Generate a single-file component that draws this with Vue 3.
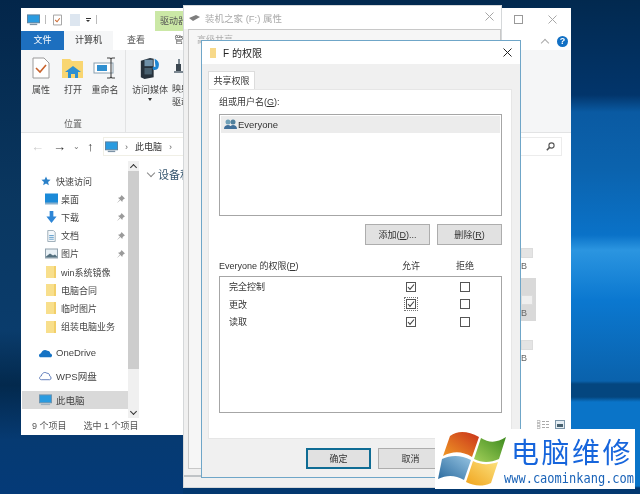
<template>
  <div class="desktop">
    <!-- explorer window -->
    <section class="win explorer">
      <header class="qat">
        <svg class="ico-pc" viewBox="0 0 14 12"><rect x="0.5" y="0.5" width="13" height="8.5" fill="#2a9be0" stroke="#5a7f9c"/><rect x="3" y="10" width="8" height="1.5" fill="#7d93a6"/></svg>
        <i class="sep"></i>
        <svg class="ico-note" viewBox="0 0 10 12"><path d="M.5.5h9v11h-9z" fill="#fff" stroke="#9a9a9a"/><path d="M2.5 6l2 2 3-4" fill="none" stroke="#cc6a33" stroke-width="1.2"/></svg>
        <i class="ghost"></i>
        <span class="drop"></span>
        <i class="sep"></i>
      </header>
      <div class="context">驱动器工具</div>
      <nav class="tabs">
        <span class="file">文件</span>
        <span class="active">计算机</span>
        <span class="plain view">查看</span>
        <span class="plain">管理</span>
      </nav>
      <div class="ribbon">
        <div class="group first">
          <div class="tools">
            <div class="tool">
              <svg width="18" height="22" viewBox="0 0 18 22"><path d="M1 1h11l5 5v15H1z" fill="#fff" stroke="#9a9a9a"/><path d="M4 11l4 4 6-7" fill="none" stroke="#c9622b" stroke-width="1.6"/></svg>
              <span>属性</span>
            </div>
            <div class="tool">
              <svg width="22" height="22" viewBox="0 0 22 22"><path d="M0 2h8l2 2h11v17H0z" fill="#f9d671"/><path d="M6 21v-6H3l8-6 8 6h-3v6h-3v-4H9v4z" fill="#2e8fd0"/></svg>
              <span>打开</span>
            </div>
            <div class="tool">
              <svg width="24" height="22" viewBox="0 0 24 22"><rect x="1" y="6" width="19" height="10" fill="#fff" stroke="#8aa0b0"/><rect x="4" y="8" width="10" height="6" fill="#2e8fd0"/><path d="M14 1h3l1 1 1-1h3M18 2v18M14 21h3l1-1 1 1h3" fill="none" stroke="#444" stroke-width="1.1"/></svg>
              <span>重命名</span>
            </div>
          </div>
          <label>位置</label>
        </div>
        <div class="group">
          <div class="tools">
            <div class="tool media">
              <svg width="24" height="24" viewBox="0 0 24 24"><path d="M2 4l10-3 4 1v20l-10 2-4-2z" fill="#26323c"/><rect x="6" y="3" width="9" height="7" fill="#6e90a8"/><rect x="6" y="12" width="8" height="7" fill="#48606f"/><path d="M17 2c4 2 6 5 4 10-1 2-5 3-6 1s2-3 3-2z" fill="#1e86d2"/></svg>
              <span>访问媒体</span>
              <b class="caret"></b>
            </div>
            <div class="tool cut">
              <svg width="14" height="22" viewBox="0 0 14 22"><rect x="4" y="7" width="5" height="7" fill="#3a4650"/><path d="M6 2h2v5H6zM2 14h10v2H2z" fill="#7c8892"/></svg>
              <span>映射<br>驱动</span>
            </div>
          </div>
        </div>
      </div>
      <div class="address">
        <span class="arrow back">←</span>
        <span class="arrow">→</span>
        <span class="chev">⌄</span>
        <span class="arrow up">↑</span>
        <div class="crumb">
          <svg width="13" height="12" viewBox="0 0 14 12"><rect x="0.5" y="0.5" width="13" height="8.5" fill="#2a9be0" stroke="#5a7f9c"/><rect x="3" y="10" width="8" height="1.5" fill="#7d93a6"/></svg>
          <span class="gt">›</span>
          <span>此电脑</span>
          <span class="gt">›</span>
        </div>
        <div class="search">
          <svg width="9" height="9" viewBox="0 0 9 9"><circle cx="5.5" cy="3.5" r="2.6" fill="none" stroke="#555" stroke-width="1.1"/><path d="M3.6 5.4L.8 8.2" stroke="#555" stroke-width="1.5"/></svg>
        </div>
      </div>
      <div class="help-row">
        <span class="collapse"></span>
        <span class="help">?</span>
      </div>
      <div class="win-btns">
        <i class="max"></i>
        <svg width="9" height="9" viewBox="0 0 9 9"><path d="M.5.5l8 8M8.5.5l-8 8" stroke="#a8a8a8"/></svg>
      </div>
      <div class="body">
        <aside class="sidebar">
          <ul class="quick">
            <li v-for="item in navItems" :key="item.name" :class="['row', item.kind]">
              <svg v-if="item.kind === 'star'" class="icon" viewBox="0 0 12 12"><path d="M6 .5l1.6 3.6 3.9.4-3 2.6.9 3.9L6 9l-3.4 2 .9-3.9-3-2.6 3.9-.4z" fill="#2a80c8"/></svg>
              <svg v-else-if="item.kind === 'desk'" class="icon" viewBox="0 0 13 11"><rect width="13" height="10" fill="#1b8ad8"/><rect y="9" width="13" height="2" fill="#8ab0cc"/></svg>
              <svg v-else-if="item.kind === 'down'" class="icon" viewBox="0 0 13 13"><path d="M4.5 0h4v6H12l-5.500 7L1 6h3.500z" fill="#2e86d6"/></svg>
              <svg v-else-if="item.kind === 'doc'" class="icon" viewBox="0 0 13 13"><path d="M2.500.5h6l2 2v10h-8z" fill="#f4f8fb" stroke="#98a8b4"/><path d="M4 6h5M4 8h5M4 10h5" stroke="#5d9bc9"/></svg>
              <svg v-else-if="item.kind === 'pic'" class="icon" viewBox="0 0 13 11"><rect x=".5" y=".5" width="12" height="9" fill="#e8f0f5" stroke="#8fa0ac"/><path d="M1 8l4-3 3 2 2-1 2 2v1H1z" fill="#54707f"/></svg>
              <svg v-else class="icon" viewBox="0 0 10 12"><rect width="10" height="12" fill="#f8df8c"/><rect x="8" width="2" height="12" fill="#f2cf6a"/></svg>
              <span class="name">{{ item.name }}</span>
              <svg v-if="item.pin" class="pin" width="8" height="8" viewBox="0 0 8 8"><path d="M4.500 0L8 3.500 6.800 4 5.500 5.500 5.300 7 1 2.700 2.500 2.500 4 1.200zM2.500 5L0 8l3-2.500z" fill="#9a9a9a"/></svg>
            </li>
          </ul>
          <div class="cloud">
            <svg class="icon wide" viewBox="0 0 14 9"><path d="M1 9c-2-1-1-4 1-4 1-3 4-5 7-3 2 0 3 1 3 3 2 0 3 3 1 4z" fill="#1673c4"/></svg>
            <span>OneDrive</span>
          </div>
          <div class="cloud wps">
            <svg class="icon wide" viewBox="0 0 14 10"><path d="M2.500 9C0 9 0 5.500 2.500 5 3 2 6 0 8.500 2c2 0 3 1 3 3 2 .5 2 4 0 4z" fill="#fff" stroke="#5a78b8"/></svg>
            <span>WPS网盘</span>
          </div>
          <div class="cloud selected">
            <svg class="icon wide" viewBox="0 0 14 12"><rect x=".5" y=".5" width="13" height="8.500" fill="#2a9be0" stroke="#6f93ad"/><rect x="2" y="10" width="10" height="1.500" fill="#9db0bf"/></svg>
            <span>此电脑</span>
          </div>
        </aside>
        <div class="scroll">
          <span class="up-mark"></span>
          <div class="thumb"></div>
          <span class="down-mark"></span>
        </div>
        <main class="content">
          <div class="section"><span class="sec-chev"></span>设备和驱动器</div>
        </main>
      </div>
      <footer class="status">
        <span>9 个项目</span>
        <span>选中 1 个项目</span>
      </footer>
    </section>

    <!-- drive tiles peeking out on the right of the dialogs -->
    <div class="tiles">
      <div class="tile t1"><i></i>B</div>
      <div class="tile t2"><i></i>B</div>
      <div class="tile t3"><i></i>B</div>
    </div>
    <div class="view-icons">
      <svg width="13" height="9" viewBox="0 0 13 9"><path d="M0 .5h3v2H0zM0 3.500h3v2H0zM0 6.500h3v2H0z" fill="none" stroke="#aaa" stroke-width=".7"/><path d="M5 1.500h3M9 1.500h3M5 4.500h3M9 4.500h3M5 7.500h3M9 7.500h3" stroke="#aaa"/></svg>
      <svg width="10" height="9" viewBox="0 0 10 9"><rect x=".5" y=".5" width="9" height="8" fill="#e4edf3" stroke="#7b95a8"/><rect x="2" y="4" width="6" height="3" fill="#46606f"/></svg>
    </div>

    <!-- properties dialog behind -->
    <section class="win props">
      <header class="props-title">
        <svg width="11" height="6" viewBox="0 0 11 6"><path d="M0 3l7-3 4 2-7 4z" fill="#7e7e7e"/></svg>
        <span>装机之家 (F:) 属性</span>
        <svg class="props-x" width="9" height="9" viewBox="0 0 9 9"><path d="M.5.5l8 8M8.500.5l-8 8" stroke="#a6a6a6"/></svg>
      </header>
      <div class="props-panel">高级共享</div>
      <div class="props-foot">
        <i></i><i></i><i></i>
      </div>
    </section>

    <!-- permissions dialog -->
    <section class="win perm">
      <header class="perm-title">
        <svg width="6" height="10" viewBox="0 0 6 10"><rect width="6" height="10" fill="#f7d98a"/></svg>
        <span>F 的权限</span>
        <svg class="perm-x" width="9" height="9" viewBox="0 0 9 9"><path d="M.5.5l8 8M8.500.5l-8 8" stroke="#222"/></svg>
      </header>
      <div class="perm-body">
        <div class="tab">共享权限</div>
        <div class="panel">
          <div class="label"><span>组或用户名(<u>G</u>):</span></div>
          <div class="listbox">
            <div class="user">
              <svg width="13" height="11" viewBox="0 0 13 11"><circle cx="4" cy="3" r="2.500" fill="#6fa0b8"/><circle cx="9" cy="3" r="2.500" fill="#4f7f9c"/><path d="M0 10c0-3 2-4 4-4s3 1 4 4zM6 10c0-3 1-4 3-4s4 1 4 4z" fill="#41709a"/></svg>
              <span>Everyone</span>
            </div>
          </div>
          <div class="actions">
            <button>添加(<u>D</u>)...</button>
            <button>删除(<u>R</u>)</button>
          </div>
          <div class="perm-head">
            <span>Everyone 的权限(<u>P</u>)</span>
            <span class="col">允许</span>
            <span class="col">拒绝</span>
          </div>
          <div class="perm-list">
            <div v-for="(p, i) in permissions" :key="p" class="perm-row">
              <span>{{ p }}</span>
              <span class="col"><span :class="['check', { focus: i === 1 }]">
                <svg width="10" height="10" viewBox="0 0 10 10"><rect x=".5" y=".5" width="9" height="9" fill="#fff" stroke="#555"/><path d="M2 5l2 2.300L8 2.500" fill="none" stroke="#444" stroke-width="1.100"/></svg>
              </span></span>
              <span class="col"><span class="check">
                <svg width="10" height="10" viewBox="0 0 10 10"><rect x=".5" y=".5" width="9" height="9" fill="#fff" stroke="#555"/></svg>
              </span></span>
            </div>
          </div>
        </div>
        <div class="perm-foot">
          <button class="primary">确定</button>
          <button>取消</button>
        </div>
      </div>
    </section>

    <!-- site watermark -->
    <div class="mark">
      <svg class="flag" width="72" height="58" viewBox="0 0 72 58">
        <defs>
          <linearGradient id="fr" x1="0" y1="1" x2="1" y2="0"><stop offset="0" stop-color="#f09a26"/><stop offset="1" stop-color="#c9321a"/></linearGradient>
          <linearGradient id="fg" x1="0" y1="1" x2="1" y2="0"><stop offset="0" stop-color="#a4d05a"/><stop offset="1" stop-color="#3c8a1e"/></linearGradient>
          <linearGradient id="fb" x1="0" y1="1" x2="1" y2="0"><stop offset="0" stop-color="#2a6a9e"/><stop offset="1" stop-color="#96c4e2"/></linearGradient>
          <linearGradient id="fy" x1="0" y1="1" x2="1" y2="0"><stop offset="0" stop-color="#f0a41e"/><stop offset="1" stop-color="#fce27e"/></linearGradient>
        </defs>
        <path d="M13 6C21 0 31 1 42 7l-7 20C25 21 16 21 6 26z" fill="url(#fr)"/>
        <path d="M44 8c8 5 16 5 25-1l-7 22c-9 4-17 4-25 0z" fill="url(#fg)"/>
        <path d="M5 29c9-4 19-4 29 1l-7 20c-9-5-17-5-26-1z" fill="url(#fb)"/>
        <path d="M36 31c8 4 16 4 25 1l-7 21c-9 4-17 3-25-1z" fill="url(#fy)"/>
      </svg>
      <div class="mark-text">
        <strong>电脑维修</strong>
        <small>www.caominkang.com</small>
      </div>
    </div>
  </div>
</template>

<script setup>
const navItems = [
  { name: '快速访问', kind: 'star' },
  { name: '桌面', kind: 'desk', pin: true },
  { name: '下载', kind: 'down', pin: true },
  { name: '文档', kind: 'doc', pin: true },
  { name: '图片', kind: 'pic', pin: true },
  { name: 'win系统镜像', kind: 'folder' },
  { name: '电脑合同', kind: 'folder' },
  { name: '临时图片', kind: 'folder' },
  { name: '组装电脑业务', kind: 'folder' },
]

const permissions = ['完全控制', '更改', '读取']
</script>

<style>
html, body { margin: 0; background: #03305f; }
</style>

<style scoped>
.desktop {
  position: relative;
  width: 640px;
  height: 494px;
  overflow: hidden;
  font: 9px "Liberation Sans", "Noto Sans CJK SC", sans-serif;
  color: #333;
  background:
    linear-gradient(180deg, #03264a 0, #0a3760 200px, #0a3c6c 330px, #03294d 385px, #063a72 440px, #043a78 494px) left top / 183px 100% no-repeat,
    linear-gradient(180deg, #02294f 0, #02356b 95px, #0a5aa2 112px, #0b63ae 170px, #0a72c8 235px, #2b95e0 250px, #0b78d0 300px, #0a62ac 381px, #04467f 384px, #04467f 397px, #0a74c8 402px, #0a74c8 486px, #03386f 488px);
  filter: blur(0.3px);
}
.win { position: absolute; box-sizing: border-box; }

/* explorer */
.explorer {
  left: 21px; top: 8px; width: 550px; height: 427px;
  background: #fff;
  display: flex; flex-direction: column;
}
.qat { height: 23px; display: flex; align-items: center; gap: 5px; padding-left: 6px; flex: none; }
.ico-pc { width: 13px; height: 12px; }
.ico-note { width: 9px; height: 12px; margin-left: 2px; }
.sep { width: 1px; height: 9px; background: #bbb; }
.ghost { width: 10px; height: 12px; background: #dde6f0; margin-left: 3px; }
.drop { width: 5px; height: 4px; border-top: 1px solid #333; box-sizing: border-box; position: relative; margin-left: 1px; }
.drop::after { content: ""; position: absolute; left: 0; top: 1px; border: 2.5px solid transparent; border-top-color: #333; border-bottom: 0; }
.context { position: absolute; left: 134px; top: 3px; width: 60px; height: 20px; background: #cbe8a6; color: #555; line-height: 20px; padding-left: 5px; box-sizing: border-box; white-space: nowrap; }
.tabs { height: 19px; display: flex; flex: none; line-height: 19px; }
.tabs span { text-align: center; }
.tabs .file { width: 43px; background: #1d6fbf; color: #fff; }
.tabs .active { width: 49px; height: 20px; background: #f5f6f7; }
.tabs .plain { color: #555; width: 49px; white-space: nowrap; }
.tabs .view { width: 46px; }
.ribbon { height: 83px; flex: none; background: #f5f6f7; border-bottom: 1px solid #e2e3e4; display: flex; box-sizing: border-box; }
.group { display: flex; flex-direction: column; border-right: 1px solid #e2e3e4; }
.group.first { width: 105px; box-sizing: border-box; }
.tools { display: flex; padding: 7px 0 0 4px; height: 66px; box-sizing: border-box; }
.tool { display: flex; flex-direction: column; align-items: center; gap: 4px; width: 32px; position: relative; white-space: nowrap; color: #444; }
.tool svg { height: 22px; }
.group label { text-align: center; color: #666; line-height: 16px; }
.group + .group .tools { padding-left: 0; }
.media { width: 44px; margin-left: 2px; }
.caret { width: 0; border: 2px solid transparent; border-top: 3px solid #333; border-bottom: 0; margin-top: -2px; }
.cut { width: 18px; align-items: flex-start; line-height: 13px; }
.address { height: 27px; flex: none; display: flex; align-items: center; color: #333; position: relative; padding-left: 10px; box-sizing: border-box; }
.arrow { width: 18px; font-size: 13px; }
.arrow.back { color: #ccc; width: 22px; }
.arrow.up { width: 14px; }
.chev { width: 16px; font-size: 8px; color: #777; line-height: 5px; padding-left: 2px; box-sizing: border-box; }
.crumb { display: flex; align-items: center; gap: 7px; margin-left: 2px; border: 1px solid #f0efe6; height: 19px; padding-left: 1px; width: 414px; box-sizing: border-box; font-size: 9px; }
.gt { color: #666; }
.search { position: absolute; right: 9px; top: 4px; width: 45px; height: 19px; border: 1px solid #ececec; box-sizing: border-box; display: flex; align-items: center; justify-content: flex-end; padding-right: 6px; }
.help-row { position: absolute; right: 3px; top: 28px; display: flex; align-items: center; gap: 9px; }
.collapse { width: 5px; height: 5px; border-left: 1px solid #aaa; border-top: 1px solid #aaa; transform: rotate(45deg); margin-top: 3px; }
.help { width: 11px; height: 11px; border-radius: 50%; background: #1270c4; color: #fff; text-align: center; line-height: 11px; font-weight: bold; font-size: 9px; }
.win-btns { position: absolute; right: 14px; top: 7px; display: flex; align-items: center; gap: 25px; }
.max { width: 7px; height: 7px; border: 1px solid #999; }
.body { flex: 1; display: flex; min-height: 0; padding-top: 1px; }
.sidebar { width: 107px; flex: none; padding-top: 11px; box-sizing: border-box; color: #444; }
.quick { list-style: none; margin: 0; padding: 0; }
.row { height: 18.2px; display: flex; align-items: center; padding-left: 24px; position: relative; white-space: nowrap; }
.icon { width: 13px; height: 12px; flex: none; margin-right: 3px; }
.row.star { padding-left: 20px; }
.row.star .icon { width: 10px; height: 10px; margin-right: 5px; }
.row.folder .icon { width: 10px; height: 12px; margin-right: 5px; margin-left: 1px; }
.pin { position: absolute; right: 3px; top: 5px; }
.cloud { height: 18px; display: flex; align-items: center; padding-left: 18px; margin-top: 6px; white-space: nowrap; font-size: 9.5px; }
.cloud:first-of-type { margin-top: 8px; }
.cloud .icon { margin-right: 4px; }
.wps { margin-top: 5px; }
.selected { background: #d9d9d9; margin-left: 1px; padding-left: 17px; }
.scroll { width: 11px; flex: none; background: #f0f0f0; display: flex; flex-direction: column; align-items: center; }
.up-mark, .down-mark { width: 4px; height: 4px; border-left: 1.2px solid #333; border-top: 1.2px solid #333; transform: rotate(45deg); margin: 4px 0 1px; flex: none; }
.down-mark { transform: rotate(225deg); margin: auto 0 4px; }
.thumb { width: 11px; height: 198px; background: #cdcdcd; flex: none; }
.content { flex: 1; padding: 5px 0 0 8px; }
.section { font-size: 11px; color: #36566f; display: flex; align-items: center; gap: 3px; }
.sec-chev { width: 5px; height: 5px; border-right: 1px solid #888; border-bottom: 1px solid #888; transform: rotate(45deg); margin: -3px 1px 0; }
.status { height: 17px; flex: none; display: flex; gap: 17px; padding-left: 11px; line-height: 17px; color: #555; font-size: 9px; }

/* tiles */
.tiles { position: absolute; left: 521px; top: 248px; width: 16px; }
.tile { position: absolute; left: 0; color: #666; font-size: 9px; width: 15px; }
.tile i { display: block; width: 12px; height: 10px; background: #e4e4e4; border: 1px solid #dcdcdc; box-sizing: border-box; margin-bottom: 3px; }
.t1 { top: 0; }
.t2 { top: 30px; background: #d9d9d9; padding-top: 17px; height: 43px; box-sizing: border-box; }
.t2 i { background: #efefef; }
.t3 { top: 92px; }
.view-icons { position: absolute; left: 537px; top: 420px; display: flex; gap: 5px; align-items: center; }

/* properties */
.props {
  left: 183px; top: 5px; width: 319px; height: 483px;
  background: #f0f0f0; border: 1px solid #d5d8da;
}
.props-title { height: 23px; background: #fff; display: flex; align-items: center; gap: 5px; padding-left: 5px; color: #aaa; font-size: 9.5px; position: relative; }
.props-x { position: absolute; right: 7px; top: 6px; }
.props-panel { margin: 0 0 0 4px; border: 1px solid #c8c8c8; height: 440px; padding: 3px 8px; color: #aaa; background: #f6f6f6; box-sizing: border-box; }
.props-foot { position: absolute; left: 0; right: 0; bottom: 9px; height: 3px; }
.props-foot i { position: absolute; top: 0; height: 2px; background: #bfc3c6; }
.props-foot i:nth-child(1) { left: 0; width: 168px; }
.props-foot i:nth-child(2) { left: 185px; width: 66px; }
.props-foot i:nth-child(3) { left: 258px; width: 30px; }

/* permissions */
.perm {
  left: 201px; top: 40px; width: 320px; height: 438px;
  background: #f0f0f0; border: 1px solid #6fa6c8;
  display: flex; flex-direction: column;
}
.perm-title { height: 23px; flex: none; background: #fff; display: flex; align-items: center; gap: 7px; padding-left: 8px; color: #222; font-size: 10px; position: relative; }
.perm-x { position: absolute; right: 8px; top: 7px; }
.perm-body { flex: 1; padding: 7px 8px 0 6px; display: flex; flex-direction: column; min-height: 0; }
.tab { width: 47px; height: 18px; background: #fff; border: 1px solid #dcdcdc; border-bottom: 0; box-sizing: border-box; text-align: center; line-height: 18px; flex: none; }
.panel { height: 350px; flex: none; background: #fff; box-sizing: border-box; padding: 7px 9px 0 10px; border: 1px solid #e6e6e6; }
.label { line-height: 11px; color: #333; }
.listbox { height: 102px; margin-top: 6px; border: 1px solid #a6a6a6; box-sizing: border-box; padding: 1px; }
.user { height: 17px; background: #ececec; display: flex; align-items: center; gap: 1px; padding-left: 3px; font-size: 9.5px; color: #333; }
.actions { display: flex; justify-content: flex-end; gap: 7px; margin-top: 8px; }
button {
  width: 65px; height: 21px; padding: 0;
  font: inherit; color: #333;
  background: #e1e1e1; border: 1px solid #adadad;
}
.perm-head { display: grid; grid-template-columns: 165px 54px 54px; margin-top: 16px; line-height: 11px; color: #333; }
.col { display: flex; justify-content: center; }
.perm-list { height: 137px; margin-top: 4px; border: 1px solid #a6a6a6; box-sizing: border-box; padding-top: 1px; }
.perm-row { display: grid; grid-template-columns: 155px 54px 54px; height: 17.5px; align-items: center; padding-left: 9px; color: #333; }
.check { display: flex; }
.check.focus { outline: 1px dotted #777; outline-offset: 1px; }
.perm-foot { flex: 1; display: flex; gap: 7px; padding: 9px 0 0 98px; }
.perm-foot button { height: 21px; }
.perm-foot .primary { border: 2px solid #0f6c94; }

/* watermark */
.mark {
  position: absolute; left: 435px; top: 429px; width: 200px; height: 60px;
  background: #fff; display: flex; align-items: center;
}
.flag { flex: none; margin-left: 2px; }
.mark-text { display: flex; flex-direction: column; color: #1665dc; margin-left: -5px; padding-top: 3px; }
.mark-text strong { font: 400 28px "Noto Sans CJK SC", sans-serif; letter-spacing: 2.5px; line-height: 30px; padding-left: 7px; white-space: nowrap; }
.mark-text small { font: 12px "DejaVu Sans Mono", monospace; line-height: 16px; margin-top: 4px; white-space: nowrap; transform: scaleY(1.2); color: #1a63b8; }
</style>
